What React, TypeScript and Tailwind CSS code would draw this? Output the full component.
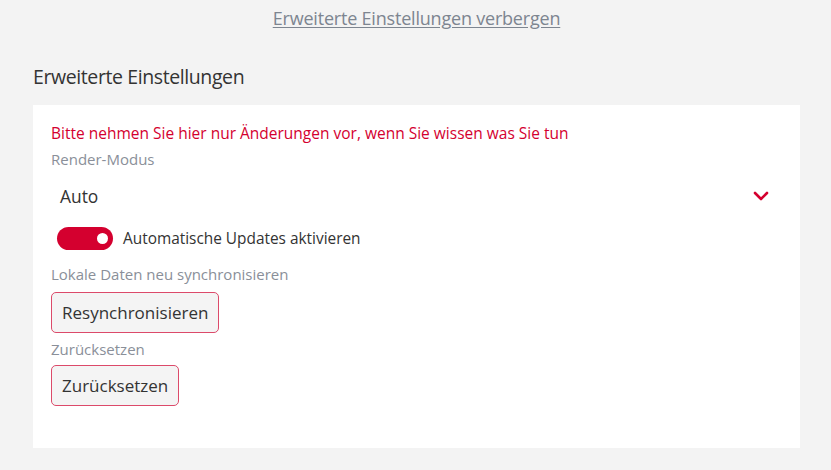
import { useState } from "react";

function Toggle({ on, onChange }: { on: boolean; onChange: (v: boolean) => void }) {
  return (
    <button
      type="button"
      onClick={() => onChange(!on)}
      className={`relative flex h-[23px] w-[56px] shrink-0 items-center rounded-full ${
        on ? "bg-[#d4002f]" : "bg-[#bbbbbb]"
      }`}
    >
      <span
        className={`absolute h-[11px] w-[11px] rounded-full bg-white ${
          on ? "left-[40px]" : "left-[6px]"
        }`}
      />
    </button>
  );
}

function ChevronDown() {
  return (
    <svg width="16" height="10" viewBox="0 0 16 10" fill="none">
      <path d="M2 2 L8 8 L14 2" stroke="#d4002f" strokeWidth="2.6" strokeLinecap="round" strokeLinejoin="round" />
    </svg>
  );
}

export default function App() {
  const [autoUpdate, setAutoUpdate] = useState(true);

  return (
    <div className="min-h-[470px] w-full bg-[#f3f3f3] pl-[33px] pr-[31px] pb-[22px] text-[#333333] [font-family:'Open_Sans',sans-serif]">
      <div className="flex justify-center pt-[6px]">
        <a href="#" className="text-[18px] leading-[24px] tracking-[-0.2px] text-[#7d8590] underline underline-offset-2">
          Erweiterte Einstellungen verbergen
        </a>
      </div>

      <h2 className="mt-[34px] text-[19.5px] leading-[26px] tracking-[-0.4px] text-[#333333]">Erweiterte Einstellungen</h2>

      <div className="mt-[15px] bg-white px-[18px] pb-[42px] pt-[18px]">
        <p className="text-[15.5px] leading-[20px] text-[#d4002f]">
          Bitte nehmen Sie hier nur Änderungen vor, wenn Sie wissen was Sie tun
        </p>
        <p className="mt-[6px] text-[15px] leading-[20px] text-[#8a8f99]">Render-Modus</p>

        <div className="mt-[9px] flex h-[36px] items-center justify-between pl-[9px] pr-[13px]">
          <span className="text-[17.4px] text-[#333333]">Auto</span>
          <ChevronDown />
        </div>

        <div className="mt-[13px] flex items-center gap-[10px] pl-[6px]">
          <Toggle on={autoUpdate} onChange={setAutoUpdate} />
          <span className="text-[15.4px] leading-[20px] text-[#333333]">Automatische Updates aktivieren</span>
        </div>

        <p className="mt-[14px] text-[15px] leading-[20px] text-[#8a8f99]">Lokale Daten neu synchronisieren</p>
        <button
          type="button"
          className="mt-[8px] h-[41px] rounded-[5px] border-[1.5px] border-[#dc4a6a] bg-[#f4f4f4] px-[10px] text-[17px] text-[#333333]"
        >
          Resynchronisieren
        </button>

        <p className="mt-[6px] text-[15px] leading-[20px] text-[#8a8f99]">Zurücksetzen</p>
        <button
          type="button"
          className="mt-[6px] h-[41px] rounded-[5px] border-[1.5px] border-[#dc4a6a] bg-[#f4f4f4] px-[10px] text-[17px] text-[#333333]"
        >
          Zurücksetzen
        </button>
      </div>
    </div>
  );
}
